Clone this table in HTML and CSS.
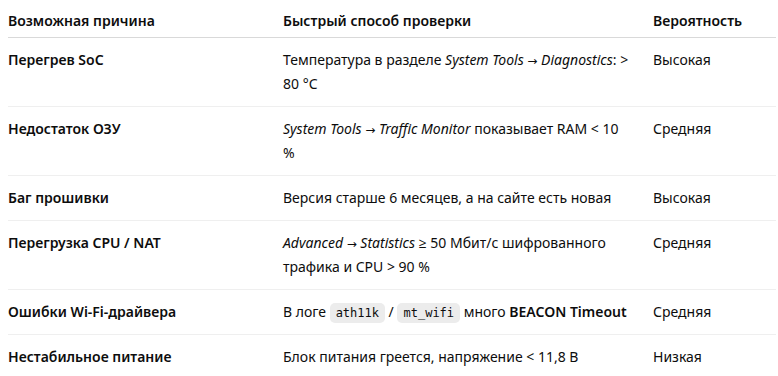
FILE: index.html
```html
<!DOCTYPE html>
<html lang="ru">
<head>
<meta charset="utf-8">
<link rel="stylesheet" href="styles.css">
</head>
<body>
<table class="tbl">
  <colgroup>
    <col class="c1"><col class="c2"><col class="c3">
  </colgroup>
  <thead>
    <tr><th>Возможная причина</th><th>Быстрый способ проверки</th><th>Вероятность</th></tr>
  </thead>
  <tbody>
    <tr><td class="name">Перегрев SoC</td><td class="check">Температура в разделе <em>System Tools</em> <span class="arr">→</span> <em>Diagnostics</em>: &gt; 80&nbsp;°C</td><td>Высокая</td></tr>
    <tr><td class="name">Недостаток ОЗУ</td><td class="check"><em>System Tools</em> <span class="arr">→</span> <em>Traffic Monitor</em> показывает RAM &lt; 10 %</td><td>Средняя</td></tr>
    <tr><td class="name">Баг прошивки</td><td class="check">Версия старше 6 месяцев, а на сайте есть новая</td><td>Высокая</td></tr>
    <tr><td class="name">Перегрузка CPU / NAT</td><td class="check"><em>Advanced</em> <span class="arr">→</span> <em>Statistics</em> ≥ 50 Мбит/с шифрованного трафика и CPU &gt; 90 %</td><td>Средняя</td></tr>
    <tr><td class="name">Ошибки Wi-Fi-драйвера</td><td class="check">В логе <code>ath11k</code> / <code>mt_wifi</code> много <strong>BEACON Timeout</strong></td><td>Средняя</td></tr>
    <tr><td class="name">Нестабильное питание</td><td class="check">Блок питания греется, напряжение &lt; 11,8 В</td><td>Низкая</td></tr>
  </tbody>
</table>
</body>
</html>
```
FILE: styles.css
```css
html, body {
  margin: 0;
  padding: 0;
  background: #ffffff;
}
body {
  padding: 0 2px 0 8px;
  font-family: "Noto Sans", "Open Sans", sans-serif;
  font-size: 14px;
  line-height: 24px;
  color: #0d0d0d;
}
.tbl {
  width: 768px;
  border-collapse: collapse;
  table-layout: fixed;
}
.c1 { width: 275px; }
.c2 { width: 370px; }
.c3 { width: 123px; }
.tbl th {
  text-align: left;
  font-weight: 600;
  padding: 9px 16px 4px 0;
  border-bottom: 1px solid #d9d9d9;
  vertical-align: top;
}
.tbl td {
  padding: 10px 16px 10px 0;
  vertical-align: top;
  border-bottom: 1px solid #efefef;
}
.tbl td.check {
  padding-right: 23px;
}
.tbl tbody tr:last-child td {
  border-bottom: none;
}
.tbl td.name {
  font-weight: 600;
}
.tbl em {
  font-style: italic;
}
.tbl .arr {
  font-family: "DejaVu Sans", sans-serif;
  font-style: normal;
  font-size: 12px;
  line-height: 1;
}
.tbl strong {
  font-weight: 600;
}
.tbl code {
  font-family: "DejaVu Sans Mono", "Liberation Mono", monospace;
  font-size: 12px;
  line-height: 1;
  background: #ececec;
  border-radius: 5px;
  padding: 3px 6px;
  color: #0d0d0d;
}
```
